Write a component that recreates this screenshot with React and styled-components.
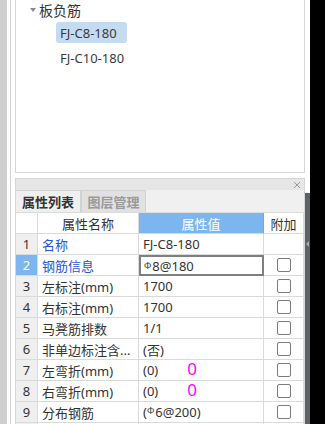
import React from "react";
import styled, { createGlobalStyle } from "styled-components";

const GlobalStyle = createGlobalStyle`
    html, body {
        margin: 0;
        padding: 0;
        background: #000;
    }
    body {
        font-family: "Noto Sans", "Noto Sans CJK SC", sans-serif;
        font-size: 13px;
        color: #333;
    }
`;

const Screen = styled.div`
    display: flex;
    width: 325px;
    height: 424px;
    overflow: hidden;
    background: #000;
`;

const LeftStrip = styled.div`
    width: 7px;
    background: #cfcfcf;
    flex: none;
`;

const Workspace = styled.div`
    width: 303px;
    flex: none;
    background: #fff;
    display: flex;
    padding-left: 3px;
    box-sizing: border-box;
    overflow: hidden;
`;

const Frame = styled.div`
    flex: 1;
    border-left: 1px solid #d6d6d6;
    padding-left: 4px;
    display: flex;
    flex-direction: column;
    gap: 5px;
    min-width: 0;
`;

const Gutter = styled.div`
    width: 5px;
    flex: none;
    display: flex;
    flex-direction: column;
`;

const GutterBar = styled.div`
    margin-top: 193px;
    flex: 1;
    background: #5d6268;
    display: flex;
    flex-direction: column;
    align-items: center;
    padding-top: 48px;
`;

const GutterArrow = styled.div`
    width: 0;
    height: 0;
    border-top: 3px solid transparent;
    border-bottom: 3px solid transparent;
    border-right: 3px solid #a9adb2;
`;

const TreePanel = styled.div`
    flex: none;
    height: 173px;
    box-sizing: border-box;
    border: 1px solid #d6d6d6;
    border-top: none;
`;

const TreeGroup = styled.div`
    display: flex;
    align-items: center;
    height: 19px;
    padding-left: 14px;
    gap: 3px;
    font-size: 14px;
    color: #333;
`;

const Caret = styled.span`
    width: 0;
    height: 0;
    border-left: 3px solid transparent;
    border-right: 3px solid transparent;
    border-top: 4px solid #8a8a8a;
`;

const TreeItem = styled.div`
    margin-left: 40px;
    margin-top: ${(p) => (p.$first ? "3px" : "4px")};
    height: 21px;
    width: ${(p) => (p.$selected ? "71px" : "auto")};
    display: flex;
    align-items: center;
    padding-left: 4px;
    box-sizing: border-box;
    border-radius: 3px;
    background: ${(p) => (p.$selected ? "#c5dbf1" : "transparent")};
    color: #3a3a3a;
    font-size: 13px;
`;

const PropPanel = styled.div`
    flex: none;
    border: 1px solid #d6d6d6;
    border-bottom: none;
    display: flex;
    flex-direction: column;
`;

const TitleBar = styled.div`
    height: 11px;
    background: #e6e6e6;
    display: flex;
    justify-content: flex-end;
    align-items: center;
    padding-right: 3px;
`;

const TabRow = styled.div`
    height: 22px;
    background: #f0f0f0;
    display: flex;
    align-items: stretch;
    border-bottom: 1px solid #dcdcdc;
`;

const Tab = styled.div`
    width: 65px;
    display: flex;
    align-items: center;
    justify-content: center;
    font-size: 13px;
    font-weight: bold;
    color: ${(p) => (p.$active ? "#333" : "#9a9a9a")};
    background: ${(p) => (p.$active ? "#efefef" : "#e1e1e1")};
    border: 1px solid #d2d2d2;
    border-bottom: none;
    border-left: ${(p) => (p.$active ? "none" : "1px solid #d2d2d2")};
    box-sizing: border-box;
`;

const Grid = styled.div`
    display: grid;
    grid-template-columns: 22px 101px 125px 40px;
    grid-auto-rows: 21px;
`;

const Cell = styled.div`
    display: flex;
    align-items: center;
    box-sizing: border-box;
    border-right: 1px solid #dadada;
    border-bottom: 1px solid #dadada;
    padding-left: ${(p) => (p.$center ? "0" : "4px")};
    justify-content: ${(p) => (p.$center ? "center" : "flex-start")};
    color: ${(p) => (p.$link ? "#2456d6" : "#333")};
    white-space: nowrap;
    overflow: hidden;
`;

const HeadCell = styled(Cell)`
    justify-content: center;
    padding-left: 0;
    background: ${(p) => (p.$active ? "#7db5ef" : "#fff")};
    color: ${(p) => (p.$active ? "#fff" : "#333")};
    border-right-color: ${(p) => (p.$active ? "#6ea8e6" : "#dadada")};
`;

const NumCell = styled(Cell)`
    justify-content: center;
    padding-left: 0;
    background: ${(p) => (p.$active ? "#7db5ef" : "#efefef")};
    color: ${(p) => (p.$active ? "#fff" : "#333")};
`;

const ValueCell = styled(Cell)`
    overflow: visible;
    ${(p) =>
        p.$editing &&
        `
        border: 2px solid #7f7f7f;
        padding-left: 3px;
    `}
`;

const Check = styled.span`
    width: 12px;
    height: 12px;
    border: 1px solid #7b7b7b;
    border-radius: 2px;
    background: #fff;
`;

const Mark = styled.span`
    font-size: 9px;
    line-height: 1;
    align-self: flex-start;
    margin-top: 4px;
    margin-right: 1px;
`;

const Note = styled.span`
    color: #ff00ff;
    font-size: 17px;
    line-height: 17px;
    margin-left: 29px;
    margin-bottom: 4px;
`;

const Grade = () => <Mark>Ф</Mark>;

const rows = [
    { name: "名称", value: "FJ-C8-180", link: true, check: false },
    { name: "钢筋信息", value: <><Grade />8@180</>, link: true, check: true, editing: true },
    { name: "左标注(mm)", value: "1700", check: true },
    { name: "右标注(mm)", value: "1700", check: true },
    { name: "马凳筋排数", value: "1/1", check: true },
    { name: "非单边标注含...", value: "(否)", check: true },
    { name: "左弯折(mm)", value: "(0)", note: "0", check: true },
    { name: "右弯折(mm)", value: "(0)", note: "0", check: true },
    { name: "分布钢筋", value: <>(<Grade />6@200)</>, check: true },
    { name: "", value: "", check: false },
];

const CloseIcon = () => (
    <svg width="8" height="8" viewBox="0 0 8 8">
        <path d="M1 1L7 7M7 1L1 7" stroke="#9a9a9a" strokeWidth="1" />
    </svg>
);

const App = () => {
    return (
        <>
            <GlobalStyle />
            <Screen>
                <LeftStrip />
                <Workspace>
                    <Frame>
                        <TreePanel>
                            <TreeGroup>
                                <Caret />
                                板负筋
                            </TreeGroup>
                            <TreeItem $first $selected>FJ-C8-180</TreeItem>
                            <TreeItem>FJ-C10-180</TreeItem>
                        </TreePanel>
                        <PropPanel>
                            <TitleBar>
                                <CloseIcon />
                            </TitleBar>
                            <TabRow>
                                <Tab $active>属性列表</Tab>
                                <Tab>图层管理</Tab>
                            </TabRow>
                            <Grid>
                                <HeadCell />
                                <HeadCell>属性名称</HeadCell>
                                <HeadCell $active>属性值</HeadCell>
                                <HeadCell>附加</HeadCell>
                                {rows.map((r, i) => (
                                    <React.Fragment key={i}>
                                        <NumCell $active={i === 1}>{i < 9 ? i + 1 : ""}</NumCell>
                                        <Cell $link={r.link}>{r.name}</Cell>
                                        <ValueCell $editing={r.editing}>
                                            {r.value}
                                            {r.note && <Note>{r.note}</Note>}
                                        </ValueCell>
                                        <Cell $center>{r.check && <Check />}</Cell>
                                    </React.Fragment>
                                ))}
                            </Grid>
                        </PropPanel>
                    </Frame>
                    <Gutter>
                        <GutterBar>
                            <GutterArrow />
                        </GutterBar>
                    </Gutter>
                </Workspace>
            </Screen>
        </>
    );
};

export default App;
